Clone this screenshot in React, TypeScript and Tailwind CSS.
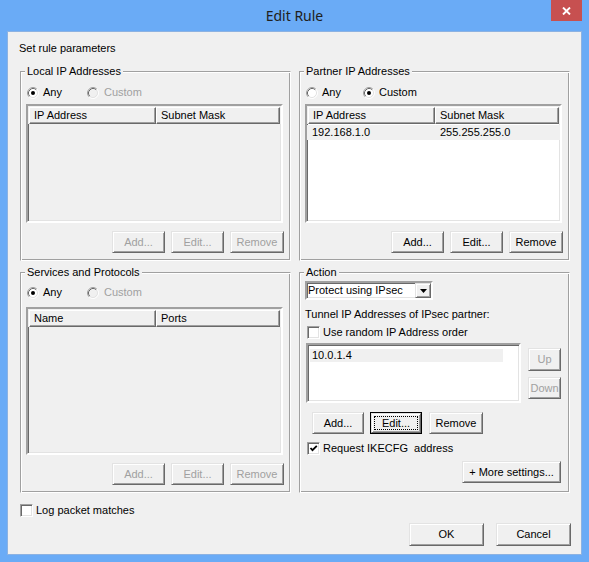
import React from "react"

const ui = "font-['Liberation_Sans',Arial,sans-serif] text-[11px] leading-[13px] text-black"
const raised =
  "bg-[#f0f0f0] border border-t-[#e3e3e3] border-l-[#e3e3e3] border-r-[#696969] border-b-[#696969] shadow-[inset_1px_1px_0_#fff,inset_-1px_-1px_0_#a0a0a0]"
const sunken =
  "border border-t-[#a0a0a0] border-l-[#a0a0a0] border-r-white border-b-white shadow-[inset_1px_1px_0_#696969,inset_-1px_-1px_0_#e3e3e3]"
const sunken2 =
  "border-2 border-t-[#a0a0a0] border-l-[#a0a0a0] border-r-white border-b-white shadow-[inset_1px_1px_0_#696969,inset_-1px_-1px_0_#e3e3e3]"

function Radio({ checked, disabled }: { checked?: boolean; disabled?: boolean }) {
  return (
    <svg width="12" height="12" viewBox="0 0 12 12" className="shrink-0">
      <circle cx="6" cy="6" r="5" fill={disabled ? "#f0f0f0" : "#fff"} />
      <path d="M2.11 9.89 A5.5 5.5 0 0 1 9.89 2.11" stroke="#a0a0a0" fill="none" />
      <path d="M9.89 2.11 A5.5 5.5 0 0 1 2.11 9.89" stroke="#fff" fill="none" />
      <path d="M2.82 9.18 A4.5 4.5 0 0 1 9.18 2.82" stroke="#696969" fill="none" />
      <path d="M9.18 2.82 A4.5 4.5 0 0 1 2.82 9.18" stroke="#e3e3e3" fill="none" />
      {checked && <circle cx="6" cy="6" r="2" fill="#000" />}
    </svg>
  )
}

function Check({ checked }: { checked?: boolean }) {
  return (
    <div className={`w-[13px] h-[13px] shrink-0 bg-white flex items-center justify-center ${sunken}`}>
      {checked && (
        <svg width="9" height="9" viewBox="0 0 9 9">
          <path d="M1.5 4 L3.5 6.2 L7.8 1.8" stroke="#000" strokeWidth="1.8" fill="none" />
        </svg>
      )}
    </div>
  )
}

function Btn({
  children,
  className = "",
  disabled,
  focused,
}: {
  children: React.ReactNode
  className?: string
  disabled?: boolean
  focused?: boolean
}) {
  const color = disabled ? "text-[#a0a0a0]" : "text-black"
  if (focused) {
    return (
      <div className={`border border-black flex ${className}`}>
        <div className={`flex-1 flex p-[2px] ${raised}`}>
          <div className={`flex-1 flex items-center justify-center border border-dotted border-black ${color}`}>
            {children}
          </div>
        </div>
      </div>
    )
  }
  return <div className={`flex items-center justify-center ${raised} ${color} ${className}`}>{children}</div>
}

function Group({
  title,
  className = "",
  children,
}: {
  title: string
  className?: string
  children: React.ReactNode
}) {
  return (
    <div
      className={`flex flex-col border border-t-[#a0a0a0] border-l-[#a0a0a0] border-r-white border-b-white shadow-[inset_1px_1px_0_#fff,inset_-1px_-1px_0_#a0a0a0] ${className}`}
    >
      <div className="-mt-[7px] -ml-px self-start bg-[#f0f0f0] px-[2px] leading-[13px]">{title}</div>
      {children}
    </div>
  )
}

function HeaderCell({ children, className = "" }: { children: React.ReactNode; className?: string }) {
  return (
    <div
      className={`h-[17px] flex items-center pl-[4px] border border-t-white border-l-white border-r-[#696969] border-b-[#696969] shadow-[inset_-1px_-1px_0_#a0a0a0] ${className}`}
    >
      {children}
    </div>
  )
}

function ListView({
  cols,
  height,
  white,
  children,
}: {
  cols: [string, string]
  height: string
  white?: boolean
  children?: React.ReactNode
}) {
  return (
    <div className={`w-[257px] ${height} ${sunken2} ${white ? "bg-white" : "bg-[#f0f0f0]"}`}>
      <div className="flex bg-[#f0f0f0] pl-px pt-px">
        <HeaderCell className="w-[127px]">{cols[0]}</HeaderCell>
        <HeaderCell className="flex-1 mr-px">{cols[1]}</HeaderCell>
      </div>
      {children}
    </div>
  )
}

function RadioRow({ custom, firstWidth, gap }: { custom?: boolean; firstWidth: string; gap: string }) {
  return (
    <div className="ml-px flex items-center h-[13px]">
      <div className={`flex items-center ${firstWidth}`}>
        <Radio checked={!custom} />
        <span className="ml-[4px]">Any</span>
      </div>
      <Radio checked={custom} disabled={!custom} />
      <span className={`${gap} ${custom ? "" : "text-[#a0a0a0]"}`}>Custom</span>
    </div>
  )
}

function ListButtons({ disabled }: { disabled?: boolean }) {
  return (
    <div className="mt-[8px] flex justify-end gap-[6px]">
      <Btn disabled={disabled} className="w-[53px] h-[22px]">Add...</Btn>
      <Btn disabled={disabled} className="w-[53px] h-[22px]">Edit...</Btn>
      <Btn disabled={disabled} className="w-[54px] h-[22px]">Remove</Btn>
    </div>
  )
}

export default function App() {
  return (
    <div className={`w-[589px] h-[562px] bg-[#6aabf6] flex flex-col ${ui}`}>
      {/* title bar */}
      <div className="h-[31px] shrink-0 flex items-start">
        <div className="w-[38px]" />
        <div className="flex-1 h-[31px] flex items-center justify-center font-['Noto_Sans',sans-serif] text-[14px] leading-[18px] text-[#202020] pt-[1px]">
          Edit Rule
        </div>
        <div className="w-[31px] h-[21px] bg-[#c75050] flex items-center justify-center">
          <svg width="9" height="8" viewBox="0 0 9 8">
            <path d="M1 0.5 L8 7.5 M8 0.5 L1 7.5" stroke="#fff" strokeWidth="1.9" />
          </svg>
        </div>
        <div className="w-[7px]" />
      </div>

      {/* client area */}
      <div className="mx-[7px] w-[575px] h-[524px] border border-[#8cb2e2] bg-[#f0f0f0] flex flex-col pt-[10px]">
        <div className="pl-[11px]">Set rule parameters</div>

        <div className="mt-[16px] ml-[12px] grid grid-cols-[271px_271px] grid-rows-[190px_221px] gap-x-[8px] gap-y-[11px]">
          <Group title="Local IP Addresses" className="pl-[5px] pr-[6px]">
            <div className="mt-[8px]">
              <RadioRow firstWidth="w-[60px]" gap="ml-[5px]" />
            </div>
            <div className="mt-[5px]">
              <ListView cols={["IP Address", "Subnet Mask"]} height="h-[119px]" />
            </div>
            <ListButtons disabled />
          </Group>

          <Group title="Partner IP Addresses" className="pl-[5px] pr-[6px]">
            <div className="mt-[8px]">
              <RadioRow custom firstWidth="w-[57px]" gap="ml-[4px]" />
            </div>
            <div className="mt-[5px]">
              <ListView cols={["IP Address", "Subnet Mask"]} height="h-[119px]" white>
                <div className="mt-px h-[15px] flex items-center bg-[#f0f0f0]">
                  <span className="w-[127px] pl-[5px]">192.168.1.0</span>
                  <span className="pl-[6px]">255.255.255.0</span>
                </div>
              </ListView>
            </div>
            <ListButtons />
          </Group>

          <Group title="Services and Protocols" className="pl-[5px] pr-[6px]">
            <div className="mt-[7px]">
              <RadioRow firstWidth="w-[60px]" gap="ml-[5px]" />
            </div>
            <div className="mt-[8px]">
              <ListView cols={["Name", "Ports"]} height="h-[148px]" />
            </div>
            <ListButtons disabled />
          </Group>

          <Group title="Action" className="pl-[5px] pr-[8px]">
            <div className={`mt-[2px] w-[128px] h-[19px] bg-white flex items-stretch ${sunken2}`}>
              <div className="flex-1 flex items-center pl-[1px]">Protect using IPsec</div>
              <div className={`w-[16px] flex items-center justify-center ${raised}`}>
                <svg width="7" height="4" viewBox="0 0 7 4">
                  <polygon points="0,0 7,0 3.5,4" fill="#000" />
                </svg>
              </div>
            </div>

            <div className="mt-[8px]">Tunnel IP Addresses of IPsec partner:</div>

            <div className="mt-[5px] ml-[2px] flex items-center gap-[3px]">
              <Check />
              <span>Use random IP Address order</span>
            </div>

            <div className="mt-[4px] ml-px flex">
              <div className={`w-[215px] h-[60px] bg-white pt-[4px] pl-[2px] ${sunken2}`}>
                <div className="w-[193px] h-[13px] flex items-center pl-[2px] bg-[#f0f0f0]">10.0.1.4</div>
              </div>
              <div className="ml-[7px] mt-[5px] flex flex-col">
                <Btn disabled className="w-[33px] h-[23px]">Up</Btn>
                <Btn disabled className="mt-[6px] w-[33px] h-[22px]">Down</Btn>
              </div>
            </div>

            <div className="mt-[9px] ml-[7px] flex">
              <Btn className="w-[52px] h-[22px]">Add...</Btn>
              <Btn focused className="ml-[6px] w-[52px] h-[22px]">Edit...</Btn>
              <Btn className="ml-[7px] w-[54px] h-[22px]">Remove</Btn>
            </div>

            <div className="mt-[8px] ml-[2px] flex items-center gap-[3px]">
              <Check checked />
              <span className="whitespace-pre">Request IKECFG  address</span>
            </div>

            <Btn className="mt-[6px] self-end w-[99px] h-[22px]">+ More settings...</Btn>
          </Group>
        </div>

        <div className="mt-[11px] ml-[12px] flex items-center gap-[3px]">
          <Check />
          <span>Log packet matches</span>
        </div>

        <div className="mt-[6px] pr-[10px] flex justify-end gap-[12px]">
          <Btn className="w-[75px] h-[23px]">OK</Btn>
          <Btn className="w-[75px] h-[23px]">Cancel</Btn>
        </div>
      </div>
    </div>
  )
}
